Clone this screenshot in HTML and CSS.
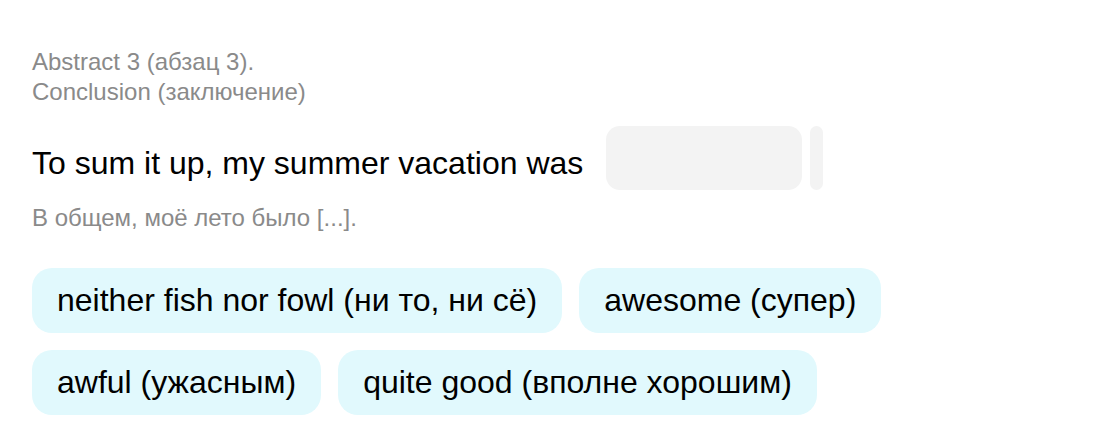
FILE: index.html
```html
<!DOCTYPE html>
<html>
<head>
<meta charset="utf-8">
<link rel="stylesheet" href="styles.css">
</head>
<body>
<div class="page">
  <div class="heading">
    <div>Abstract 3 (абзац 3).</div>
    <div>Conclusion (заключение)</div>
  </div>
  <div class="sentence">
    <span class="text">To sum it up, my summer vacation was</span>
    <span class="gap"></span>
    <span class="caret"></span>
  </div>
  <div class="translation">В общем, моё лето было [...].</div>
  <div class="options">
    <div class="chip">neither fish nor fowl (ни то, ни сё)</div>
    <div class="chip">awesome (супер)</div>
    <div class="chip">awful (ужасным)</div>
    <div class="chip">quite good (вполне хорошим)</div>
  </div>
</div>
</body>
</html>
```
FILE: styles.css
```css
html, body {
  margin: 0;
  padding: 0;
  background: #ffffff;
}
body {
  font-family: "Liberation Sans", Arial, sans-serif;
}
.page {
  padding: 47px 32px 0 32px;
  width: 900px;
}
.heading {
  color: #8a8a8a;
  font-size: 24px;
  line-height: 30px;
}
.sentence {
  display: flex;
  align-items: center;
  margin-top: 19px;
  height: 64px;
}
.text {
  font-size: 32px;
  color: #000;
  padding-top: 10px;
}
.gap {
  width: 196px;
  height: 64px;
  background: #f3f3f3;
  border-radius: 14px;
  margin-left: 23px;
}
.caret {
  width: 13px;
  height: 64px;
  background: #f3f3f3;
  border-radius: 7px;
  margin-left: 8px;
}
.translation {
  color: #8a8a8a;
  font-size: 24px;
  margin-top: 13px;
  line-height: 30px;
}
.options {
  display: flex;
  flex-wrap: wrap;
  gap: 17px;
  margin-top: 35px;
  width: 880px;
}
.chip {
  background: #e1f9fd;
  border-radius: 20px;
  height: 65px;
  display: flex;
  align-items: center;
  padding: 0 25px;
  font-size: 32px;
  color: #000;
}
```
